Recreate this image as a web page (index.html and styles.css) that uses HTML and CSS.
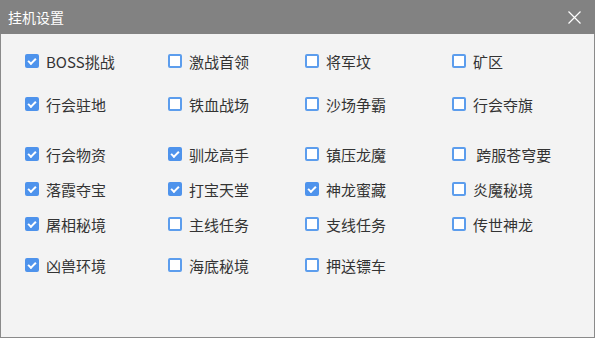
FILE: index.html
```html
<!DOCTYPE html>
<html lang="zh-CN">
<head>
    <meta charset="UTF-8">
    <title>挂机设置</title>
    <link rel="stylesheet" href="styles.css">
</head>
<body>
    <div class="window">
        <div class="titlebar">
            <span class="title">挂机设置</span>
            <span class="close">
                <svg width="13" height="13" viewBox="0 0 13 13"><path d="M0.5 0.5L12.5 12.5M12.5 0.5L0.5 12.5" stroke="#fff" stroke-width="1.2"/></svg>
            </span>
        </div>
        <div class="content">
            <div class="grid">
                <label class="item"><span class="box checked"></span>BOSS挑战</label>
                <label class="item"><span class="box"></span>激战首领</label>
                <label class="item"><span class="box"></span>将军坟</label>
                <label class="item"><span class="box"></span>矿区</label>

                <label class="item"><span class="box checked"></span>行会驻地</label>
                <label class="item"><span class="box"></span>铁血战场</label>
                <label class="item"><span class="box"></span>沙场争霸</label>
                <label class="item"><span class="box"></span>行会夺旗</label>

                <label class="item"><span class="box checked"></span>行会物资</label>
                <label class="item"><span class="box checked"></span>驯龙高手</label>
                <label class="item"><span class="box"></span>镇压龙魔</label>
                <label class="item"><span class="box"></span>&nbsp;跨服苍穹要</label>

                <label class="item"><span class="box checked"></span>落霞夺宝</label>
                <label class="item"><span class="box checked"></span>打宝天堂</label>
                <label class="item"><span class="box checked"></span>神龙蜜藏</label>
                <label class="item"><span class="box"></span>炎魔秘境</label>

                <label class="item"><span class="box checked"></span>屠相秘境</label>
                <label class="item"><span class="box"></span>主线任务</label>
                <label class="item"><span class="box"></span>支线任务</label>
                <label class="item"><span class="box"></span>传世神龙</label>

                <label class="item"><span class="box checked"></span>凶兽环境</label>
                <label class="item"><span class="box"></span>海底秘境</label>
                <label class="item"><span class="box"></span>押送镖车</label>
            </div>
        </div>
    </div>
</body>
</html>
```

FILE: styles.css
```css
body {
    margin: 0;
    font-family: "Noto Sans CJK SC", "Noto Sans", sans-serif;
}
.window {
    width: 595px;
    height: 338px;
    display: flex;
    flex-direction: column;
}
.titlebar {
    height: 34px;
    background-color: #828282;
    display: flex;
    align-items: center;
    justify-content: space-between;
    padding: 0 14px 0 8px;
    color: #fff;
}
.title {
    font-size: 14px;
}
.close {
    display: flex;
}
.content {
    flex: 1;
    background-color: #f3f3f3;
    border: 1px solid #8a8a8a;
    border-top: none;
    padding: 17px 0 0 24px;
}
.grid {
    display: grid;
    grid-template-columns: 143px 137px 147px 120px;
    grid-template-rows: 43px 50px 35px 35px 41px 20px;
}
.item {
    display: flex;
    align-items: center;
    height: 20px;
    font-size: 15px;
    color: #333;
    white-space: nowrap;
}
.box {
    width: 14px;
    height: 14px;
    box-sizing: border-box;
    border: 2px solid #5c9ded;
    border-radius: 2px;
    background-color: #fff;
    margin-right: 7px;
    position: relative;
}
.box.checked {
    background-color: #4e93ec;
    border-color: #4e93ec;
}
.box.checked::after {
    content: "";
    position: absolute;
    left: 2px;
    top: 0px;
    width: 6px;
    height: 3px;
    border-left: 2px solid #fff;
    border-bottom: 2px solid #fff;
    transform: rotate(-45deg);
    transform-origin: center;
    top: 2px;
    left: 1px;
}
```
